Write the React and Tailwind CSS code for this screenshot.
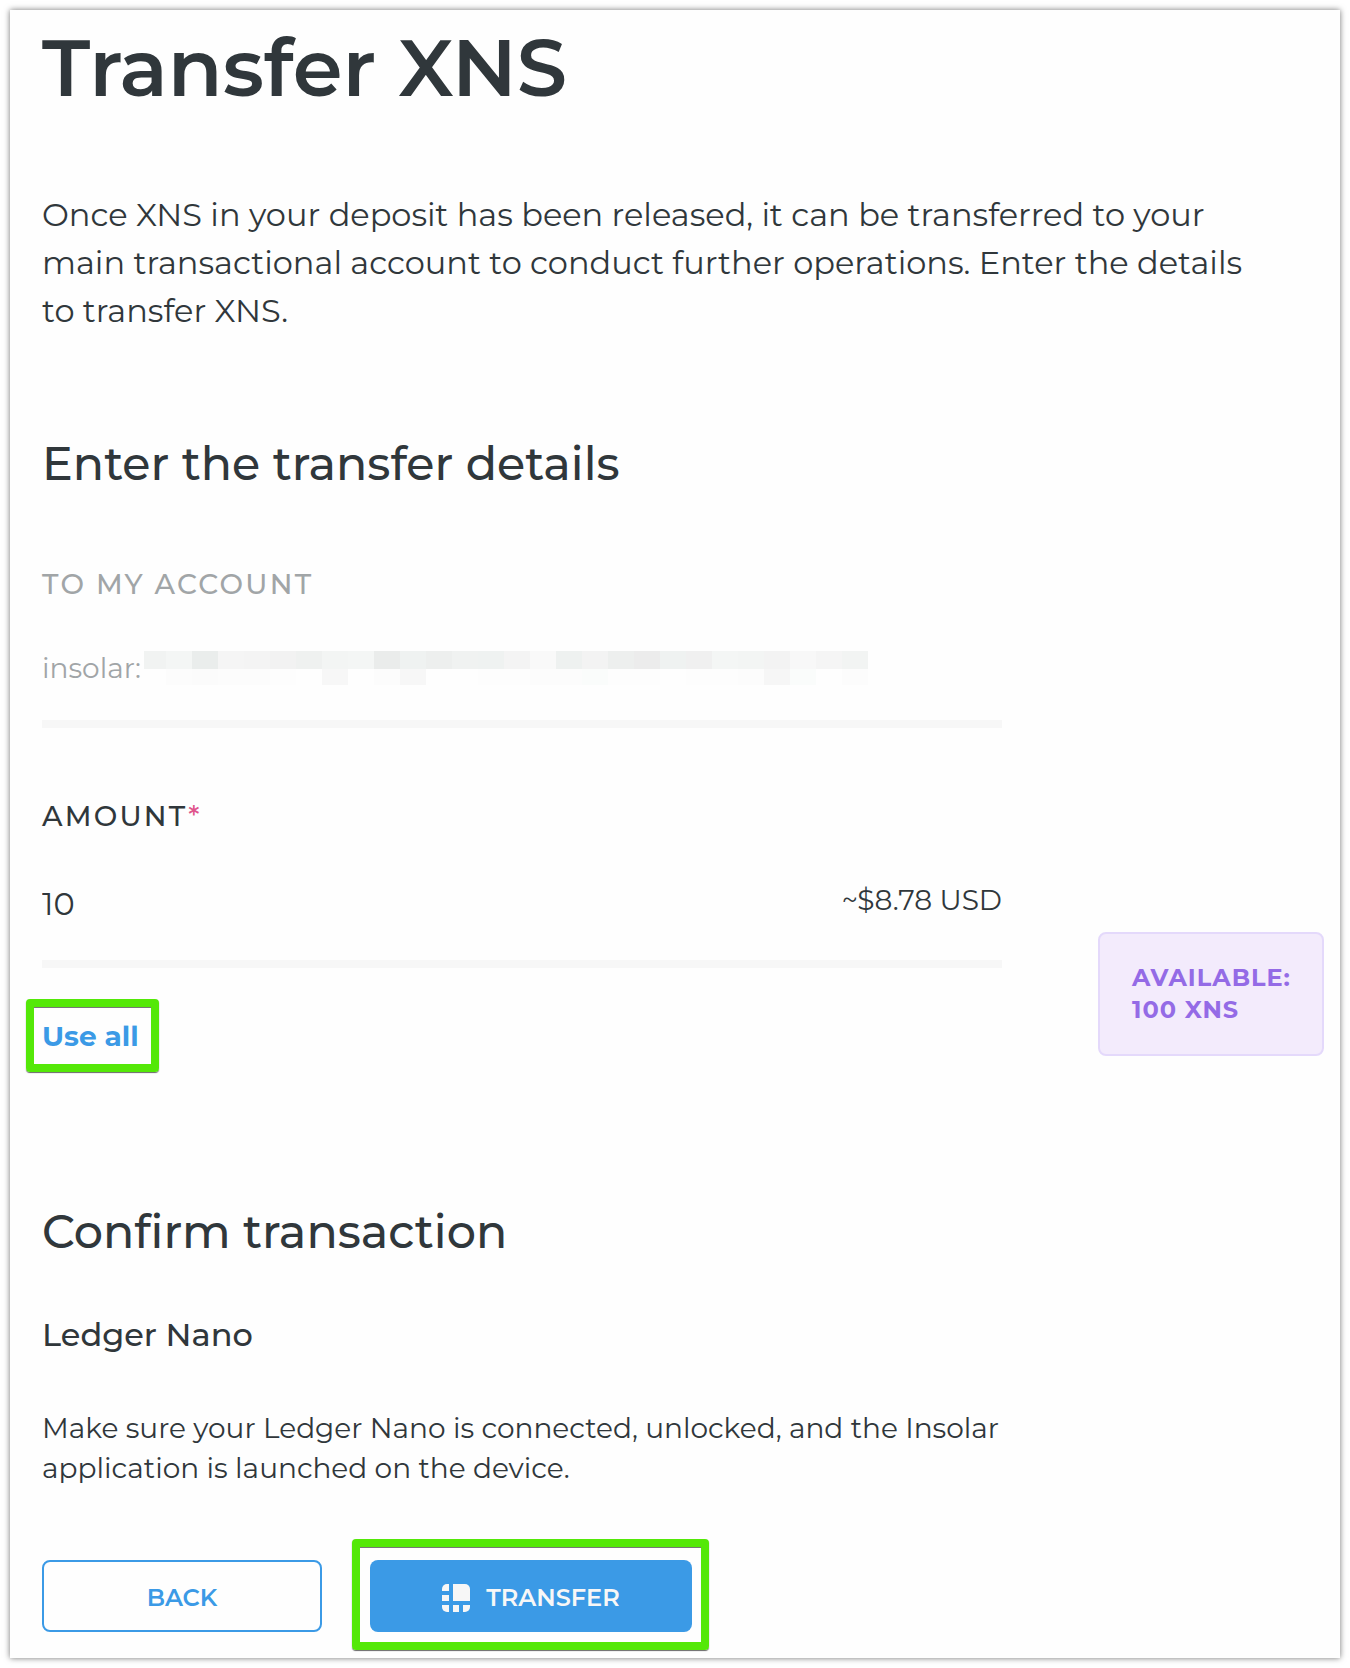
import { useState } from "react";

const maskTop = [
  "#f1f3f2", "#f4f6f5", "#eaedec", "#f5f5f5", "#f4f4f4", "#f2f2f2", "#eff1f0",
  "#f3f5f4", "#f4f6f5", "#eaeceb", "#eff2f1", "#edefee", "#f0f2f1", "#eff2f1",
  "#f4f4f4", "#f9f9f9", "#eef1f0", "#f3f3f3", "#edefee", "#ececec", "#eff2f1",
  "#f0f0f0", "#f4f6f5", "#f3f5f4", "#f3f3f3", "#f8f8f8", "#f5f5f5", "#f2f4f3",
];

const maskBottom = [
  "#fefefe", "#fcfcfc", "#fbfbfb", "#fcfcfc", "#fcfcfc", "#fdfdfd", "#fefefe",
  "#f7f7f7", "#fefefe", "#fcfcfc", "#f7f7f7", "#fefefe", "#fefefe", "#fdfdfd",
  "#fdfdfd", "#fcfcfc", "#fcfcfc", "#fafcfb", "#fdfdfd", "#fdfdfd", "#fefefe",
  "#fdfdfd", "#fdfdfd", "#fcfcfc", "#f6f6f6", "#fafcfb", "#fefefe", "#fcfcfc",
];

function AddressMask() {
  return (
    <div className="w-[724px] shrink" aria-hidden="true">
      <div className="flex h-[18px]">
        {maskTop.map((color, i) => (
          <span key={i} className="w-[26px] first:w-[22px]" style={{ backgroundColor: color }} />
        ))}
      </div>
      <div className="flex h-4">
        {maskBottom.map((color, i) => (
          <span key={i} className="w-[26px] first:w-[22px]" style={{ backgroundColor: color }} />
        ))}
      </div>
    </div>
  );
}

function Highlight({ className }) {
  return (
    <span
      aria-hidden="true"
      className={
        "pointer-events-none absolute rounded-[4px] border-8 border-[#54e808] shadow-[0_1px_1px_#666,inset_0_1px_0_#777] " +
        className
      }
    />
  );
}

function LedgerIcon() {
  return (
    <svg width="28" height="28" viewBox="0 0 28 28" fill="#f7f7f7" aria-hidden="true">
      <path d="M7 0v7H0V5a5 5 0 0 1 5-5z" />
      <path d="M11 0h12a5 5 0 0 1 5 5v12H11z" />
      <path d="M0 11h7v6H0z" />
      <path d="M0 21h7v7H5a5 5 0 0 1-5-5z" />
      <path d="M11 21h6v7h-6z" />
      <path d="M21 21h7v2a5 5 0 0 1-5 5h-2z" />
    </svg>
  );
}

export default function App() {
  const [amount, setAmount] = useState("10");

  return (
    <div className="bg-white p-[10px] font-['Montserrat','Inter',sans-serif] text-[#30373b]">
      <main className="bg-[#fefefe] pt-[10px] pr-4 pb-[26px] pl-8 shadow-[0_0_6px_rgba(0,0,0,0.55)]">
        <h1 className="text-[80px] leading-[96px] font-semibold">Transfer XNS</h1>
        <p className="mt-[75px] max-w-[1220px] text-[32px] leading-[48px] font-normal">
          Once XNS in your deposit has been released, it can be transferred to your main
          transactional account to conduct further operations. Enter the details to transfer XNS.
        </p>

        <form
          className="grid grid-cols-[1fr_226px] gap-x-24"
          onSubmit={(e) => e.preventDefault()}
        >
          <h2 className="col-start-1 mt-[101px] text-[46px] leading-[56px] font-medium">
            Enter the transfer details
          </h2>

          <div className="col-start-1 mt-[72px] border-b-8 border-[#f7f7f7] pb-8 text-[#a1a5a7]">
            <h3 className="text-[28px] leading-10 font-medium tracking-[0.08em]">TO MY ACCOUNT</h3>
            <div className="mt-11 flex items-center gap-[3px]">
              <span className="text-[28px] leading-10">insolar:</span>
              <AddressMask />
            </div>
          </div>

          <div className="col-start-1 mt-[68px]">
            <label htmlFor="amount" className="block text-[28px] leading-10 font-medium tracking-[0.08em]">
              AMOUNT<span className="text-[#e0558c]">*</span>
            </label>
            <div className="mt-11 flex items-start justify-between border-b-8 border-[#f7f7f7] pb-8">
              <input
                id="amount"
                type="text"
                value={amount}
                onChange={(e) => setAmount(e.target.value)}
                className="h-12 min-w-0 flex-1 bg-transparent text-[32px] leading-[48px] outline-none"
              />
              <span className="text-[28px] leading-10">~$8.78 USD</span>
            </div>
            <button
              type="button"
              onClick={() => setAmount("100")}
              className="relative mt-12 block text-[28px] leading-10 font-bold text-[#3b9ae6]"
            >
              Use all
              <Highlight className="-left-4 -right-5 -top-[17px] -bottom-4" />
            </button>
          </div>

          <div className="col-start-2 self-end rounded-lg border-2 border-[#e4d9fb] bg-[#f3ebfc] px-8 py-[28px] text-[24px] leading-8 font-bold tracking-[1px] text-[#946be6]">
            AVAILABLE:
            <br />
            100 XNS
          </div>

          <h2 className="col-start-1 mt-[148px] text-[46px] leading-[56px] font-medium">
            Confirm transaction
          </h2>
          <h3 className="col-start-1 mt-[55px] text-[32px] leading-10 font-medium">Ledger Nano</h3>
          <p className="col-start-1 mt-[53px] text-[28px] leading-10">
            Make sure your Ledger Nano is connected, unlocked, and the Insolar application is
            launched on the device.
          </p>

          <div className="col-start-1 mt-[72px] flex gap-12">
            <button
              type="button"
              className="h-[72px] w-[280px] rounded-lg border-2 border-[#3b9ae6] pt-1 text-[24px] leading-8 font-semibold text-[#3b9ae6]"
            >
              BACK
            </button>
            <button
              type="submit"
              className="relative flex h-[72px] w-[322px] items-center justify-center gap-4 rounded-lg bg-[#3b9ae6] pt-1 text-[24px] leading-8 font-semibold text-[#f7f7f7]"
            >
              <LedgerIcon />
              TRANSFER
              <Highlight className="-left-[18px] -right-[17px] -top-[21px] -bottom-[18px]" />
            </button>
          </div>
        </form>
      </main>
    </div>
  );
}
